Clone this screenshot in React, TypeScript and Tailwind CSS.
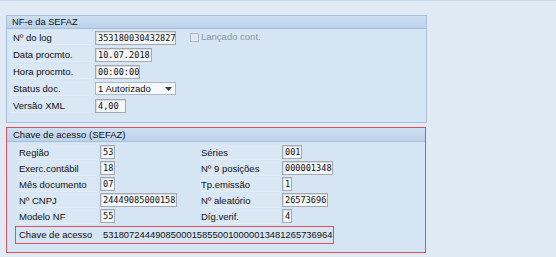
import React from "react";

const sans = { fontFamily: '"Liberation Sans", Arial, sans-serif' };
const mono = { fontFamily: '"DejaVu Sans Mono", "Liberation Mono", monospace' };

function Field({ value, w }: { value: string; w: string }) {
  return (
    <div
      className={`${w} h-[14px] shrink-0 border border-[#a2a9b1] bg-[#f4f6f8] pl-[2px] text-[8.6px] leading-[12px] text-[#111111] shadow-[inset_1px_1px_0_#d6dbe0] overflow-hidden whitespace-nowrap`}
      style={mono}
    >
      {value}
    </div>
  );
}

function Label({ text, w, pl }: { text: string; w: string; pl: string }) {
  return (
    <div className={`${w} ${pl} h-[15px] shrink-0 bg-[#dae7f4] text-[9.5px] leading-[15px] text-[#111111] border-b border-[#e4edf7] whitespace-nowrap`}>
      {text}
    </div>
  );
}

export default function App() {
  return (
    <div
      className="w-[556px] h-[257px] bg-[#dfeaf5] border-t border-[#c6d6e8] overflow-hidden"
      style={sans}
    >
      <div className="pl-[6px] pt-[14px] flex flex-col gap-[4px]">
        {/* Panel 1 */}
        <div className="w-[421px] h-[108px] border border-[#a9c0db] bg-[#d5e5f3]">
          <div className="h-[13px] bg-gradient-to-b from-[#cddff1] to-[#bcd2ea] border-b border-[#a6bdd9] pl-[5px] text-[9.3px] leading-[12px] text-[#111111]">
            NF-e da SEFAZ
          </div>
          <div className="flex flex-col">
            <div className="flex items-center h-[17px] pl-[2px]">
              <Label text="Nº do log" w="w-[84px]" pl="pl-[4px]" />
              <div className="w-[2px]" />
              <Field value="353180030432827" w="w-[81px]" />
              <div className="ml-[14px] flex items-center gap-[2px]">
                <div className="w-[9px] h-[9px] border border-[#b3bcc6] bg-[#dfe8f2]" />
                <span className="text-[9.5px] text-[#8d949c]">Lançado cont.</span>
              </div>
            </div>
            <div className="flex items-center h-[17px] pl-[2px]">
              <Label text="Data procmto." w="w-[84px]" pl="pl-[4px]" />
              <div className="w-[2px]" />
              <Field value="10.07.2018" w="w-[57px]" />
            </div>
            <div className="flex items-center h-[17px] pl-[2px]">
              <Label text="Hora procmto." w="w-[84px]" pl="pl-[4px]" />
              <div className="w-[2px]" />
              <Field value="00:00:00" w="w-[45px]" />
            </div>
            <div className="flex items-center h-[17px] pl-[2px]">
              <Label text="Status doc." w="w-[84px]" pl="pl-[4px]" />
              <div className="w-[2px]" />
              <div className="w-[81px] h-[13px] border border-[#a9b8c8] bg-[#f7f9fb] flex items-center justify-between pl-[2px] pr-[3px]">
                <span className="text-[9.5px] leading-[11px] text-[#111111]">1 Autorizado</span>
                <svg width="7" height="4" viewBox="0 0 7 4">
                  <path d="M0 0 L7 0 L3.5 4 Z" fill="#2a3a55" />
                </svg>
              </div>
            </div>
            <div className="flex items-center h-[17px] pl-[2px]">
              <Label text="Versão XML" w="w-[84px]" pl="pl-[4px]" />
              <div className="w-[2px]" />
              <Field value="4,00" w="w-[31px]" />
            </div>
          </div>
        </div>

        {/* Panel 2 */}
        <div className="w-[420px] h-[126px] border border-[#e0505a] bg-[#d5e5f3]">
          <div className="h-[14px] bg-gradient-to-b from-[#cddff1] to-[#bcd2ea] border-b border-[#a6bdd9] pl-[6px] text-[9.5px] leading-[13px] text-[#111111]">
            Chave de acesso (SEFAZ)
          </div>
          <div className="pt-[2px] flex flex-col">
            {[
              ["Região", "53", "w-[15px]", "Séries", "001", "w-[20px]"],
              ["Exerc.contábil", "18", "w-[15px]", "Nº 9 posições", "000001348", "w-[51px]"],
              ["Mês documento", "07", "w-[15px]", "Tp.emissão", "1", "w-[10px]"],
              ["Nº CNPJ", "24449085000158", "w-[77px]", "Nº aleatório", "26573696", "w-[46px]"],
              ["Modelo NF", "55", "w-[15px]", "Díg.verif.", "4", "w-[10px]"],
            ].map(([l1, v1, w1, l2, v2, w2]) => (
              <div key={l1} className="flex items-center h-[16px] pl-[10px]">
                <Label text={l1} w="w-[80px]" pl="pl-[2px]" />
                <div className="w-[3px]" />
                <div className="w-[101px] shrink-0">
                  <Field value={v1} w={w1} />
                </div>
                <Label text={l2} w="w-[79px]" pl="pl-[0px]" />
                <div className="w-[2px]" />
                <Field value={v2} w={w2} />
              </div>
            ))}
            <div className="pl-[8px] pt-[2px]">
              <div className="w-[319px] h-[18px] border border-[#e0505a] flex items-center pl-[3px]">
                <div className="w-[84px] shrink-0 text-[9.5px] text-[#111111]">Chave de acesso</div>
                <div className="text-[9.4px] text-[#111111] whitespace-nowrap">
                  53180724449085000158550010000013481265736964
                </div>
              </div>
            </div>
          </div>
        </div>
      </div>
    </div>
  );
}
